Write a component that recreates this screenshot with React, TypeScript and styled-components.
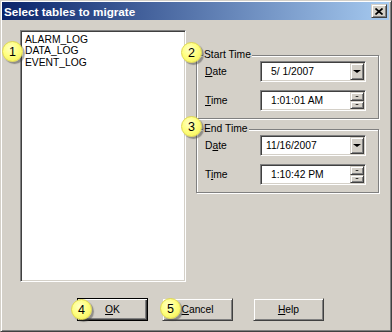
import React from 'react';
import styled, { createGlobalStyle } from 'styled-components';

const GlobalStyle = createGlobalStyle`
  html, body {
    margin: 0;
    padding: 0;
    background: #ffffff;
  }
  body {
    font-family: "Liberation Sans", Arial, sans-serif;
    font-size: 10.3px;
    color: #000;
  }
`;

const raised = `
  background: #d4d0c8;
  border: 1px solid;
  border-color: #d4d0c8 #404040 #404040 #d4d0c8;
  box-shadow: inset 1px 1px 0 #ffffff, inset -1px -1px 0 #808080;
`;

const Window = styled.div`
  position: relative;
  width: 392px;
  height: 332px;
  box-sizing: border-box;
  background: #d4d0c8;
  border: 1px solid;
  border-color: #d4d0c8 #404040 #404040 #d4d0c8;
  box-shadow: inset 1px 1px 0 #ffffff, inset -1px -1px 0 #808080;
  padding: 1px 2px 2px 1px;
  display: flex;
  flex-direction: column;
`;

const TitleBar = styled.div`
  height: 18px;
  display: flex;
  align-items: center;
  justify-content: space-between;
  padding: 0 2px 0 2px;
  background: linear-gradient(to right, #0a246a, #a6caf0);
  color: #ffffff;
  font-weight: bold;
  font-size: 11.7px;
`;

const CloseButton = styled.div`
  ${raised}
  width: 16px;
  height: 14px;
  box-sizing: border-box;
  display: flex;
  align-items: center;
  justify-content: center;
`;

const Body = styled.div`
  flex: 1;
  display: flex;
  flex-direction: column;
  padding: 10px 10px 0 18px;
`;

const TopRow = styled.div`
  display: flex;
  gap: 10px;
`;

const ListBox = styled.div`
  width: 166px;
  height: 252px;
  box-sizing: border-box;
  background: #ffffff;
  border: 1px solid;
  border-color: #808080 #ffffff #ffffff #808080;
  box-shadow: inset 1px 1px 0 #404040, inset -1px -1px 0 #d4d0c8;
  padding: 3px 4px;
`;

const ListItem = styled.div`
  height: 11.3px;
  line-height: 11px;
  white-space: nowrap;
`;

const RightColumn = styled.div`
  width: 183px;
  display: flex;
  flex-direction: column;
  gap: 10px;
  padding-top: 25px;
`;

const Group = styled.div`
  position: relative;
  height: 64px;
  box-sizing: border-box;
  border: 1px solid #808080;
  box-shadow: inset 1px 1px 0 #ffffff, 1px 1px 0 #ffffff;
  padding: 5px 12px 0 8px;
  display: flex;
  flex-direction: column;
  gap: 8px;
`;

const Legend = styled.span`
  position: absolute;
  left: 6px;
  top: -7px;
  padding: 0 1px;
  background: #d4d0c8;
  line-height: 12px;
`;

const FieldRow = styled.div`
  display: flex;
  align-items: center;
  justify-content: space-between;
`;

const Label = styled.span`
  line-height: 12px;
`;

const Field = styled.div`
  width: 106px;
  height: 21px;
  box-sizing: border-box;
  background: #ffffff;
  border: 1px solid;
  border-color: #808080 #ffffff #ffffff #808080;
  box-shadow: inset 1px 1px 0 #404040, inset -1px -1px 0 #d4d0c8;
  display: flex;
  align-items: center;
  padding: 1px;
`;

const FieldText = styled.span<{ $indent: number }>`
  flex: 1;
  padding-left: ${p => p.$indent}px;
  white-space: pre;
`;

const DropButton = styled.div`
  ${raised}
  width: 14px;
  height: 17px;
  box-sizing: border-box;
  display: flex;
  align-items: center;
  justify-content: center;
`;

const SpinStack = styled.div`
  display: flex;
  flex-direction: column;
  width: 14px;
  height: 17px;
`;

const SpinButton = styled.div`
  ${raised}
  flex: 1;
  box-sizing: border-box;
  display: flex;
  align-items: center;
  justify-content: center;
`;

const Arrow = styled.div<{ $up?: boolean; $size: number }>`
  width: 0;
  height: 0;
  border-left: ${p => p.$size}px solid transparent;
  border-right: ${p => p.$size}px solid transparent;
  ${p => (p.$up ? 'border-bottom' : 'border-top')}: ${p => p.$size - 1 || 1}px solid #000;
`;

const ButtonRow = styled.div`
  display: flex;
  margin-top: 16px;
  padding-left: 57px;
`;

const Button = styled.div<{ $default?: boolean; $gap: number }>`
  ${raised}
  width: 71px;
  height: 23px;
  box-sizing: border-box;
  margin-left: ${p => p.$gap}px;
  display: flex;
  align-items: center;
  justify-content: center;
  ${p =>
    p.$default &&
    `
    border-color: #000;
    box-shadow: inset 1px 1px 0 #ffffff, inset -1px -1px 0 #404040, inset -2px -2px 0 #808080;
  `}
`;

const Badge = styled.div<{ $x: number; $y: number }>`
  position: absolute;
  left: ${p => p.$x}px;
  top: ${p => p.$y}px;
  width: 21px;
  height: 21px;
  border-radius: 50%;
  box-sizing: border-box;
  border: 1px solid #e0d850;
  background: radial-gradient(circle at 40% 35%, #ffffc8 0%, #ffff80 45%, #f2ee50 100%);
  box-shadow: 2px 2px 1px rgba(60, 60, 60, 0.45);
  display: flex;
  align-items: center;
  justify-content: center;
  font-size: 12.5px;
  line-height: 12px;
  color: #000;
`;

const DateField = ({ value, indent }: { value: string; indent: number }) => (
  <Field>
    <FieldText $indent={indent}>{value}</FieldText>
    <DropButton>
      <Arrow $size={4} />
    </DropButton>
  </Field>
);

const TimeField = ({ value, indent }: { value: string; indent: number }) => (
  <Field>
    <FieldText $indent={indent}>{value}</FieldText>
    <SpinStack>
      <SpinButton>
        <Arrow $up $size={2} />
      </SpinButton>
      <SpinButton>
        <Arrow $size={2} />
      </SpinButton>
    </SpinStack>
  </Field>
);

const TimeGroup = ({
  title,
  date,
  time,
  dateLabel,
  timeLabel,
  dateIndent,
}: {
  title: string;
  date: string;
  time: string;
  dateLabel: React.ReactNode;
  timeLabel: React.ReactNode;
  dateIndent: number;
}) => (
  <Group>
    <Legend>{title}</Legend>
    <FieldRow>
      <Label>{dateLabel}</Label>
      <DateField value={date} indent={dateIndent} />
    </FieldRow>
    <FieldRow>
      <Label>{timeLabel}</Label>
      <TimeField value={time} indent={9} />
    </FieldRow>
  </Group>
);

export default function App() {
  return (
    <>
      <GlobalStyle />
      <Window>
        <TitleBar>
          <span>Select tables to migrate</span>
          <CloseButton>
            <svg width="8" height="7" viewBox="0 0 8 7">
              <path d="M0.5 0.5 L7.5 6.5 M7.5 0.5 L0.5 6.5" stroke="#000" strokeWidth="1.7" />
            </svg>
          </CloseButton>
        </TitleBar>
        <Body>
          <TopRow>
            <ListBox>
              <ListItem>ALARM_LOG</ListItem>
              <ListItem>DATA_LOG</ListItem>
              <ListItem>EVENT_LOG</ListItem>
            </ListBox>
            <RightColumn>
              <TimeGroup
                title="Start Time"
                date="5/ 1/2007"
                time="1:01:01 AM"
                dateIndent={9}
                dateLabel={<><u>D</u>ate</>}
                timeLabel={<><u>T</u>ime</>}
              />
              <TimeGroup
                title="End Time"
                date="11/16/2007"
                time="1:10:42 PM"
                dateIndent={4}
                dateLabel={<>D<u>a</u>te</>}
                timeLabel={<>T<u>i</u>me</>}
              />
            </RightColumn>
          </TopRow>
          <ButtonRow>
            <Button $default $gap={0}>
              <span><u>O</u>K</span>
            </Button>
            <Button $gap={14}>
              <span><u>C</u>ancel</span>
            </Button>
            <Button $gap={20}>
              <span><u>H</u>elp</span>
            </Button>
          </ButtonRow>
        </Body>
        <Badge $x={1} $y={40}>1</Badge>
        <Badge $x={180} $y={41}>2</Badge>
        <Badge $x={180} $y={115}>3</Badge>
        <Badge $x={70} $y={298}>4</Badge>
        <Badge $x={159} $y={297}>5</Badge>
      </Window>
    </>
  );
}
